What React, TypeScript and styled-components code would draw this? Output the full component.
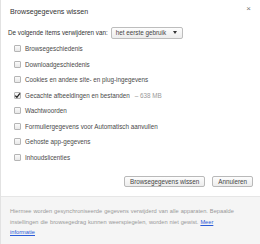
import React from 'react'
import styled, { createGlobalStyle } from 'styled-components'

const GlobalStyle = createGlobalStyle`
  html, body {
    margin: 0;
    padding: 0;
    background: #fff;
  }
  body {
    font-family: 'Liberation Sans', Arial, sans-serif;
    color: #333;
  }
`

const items = [
  { label: 'Browsegeschiedenis' },
  { label: 'Downloadgeschiedenis' },
  { label: 'Cookies en andere site- en plug-ingegevens' },
  { label: 'Gecachte afbeeldingen en bestanden', checked: true, extra: '– 638 MB' },
  { label: 'Wachtwoorden' },
  { label: 'Formuliergegevens voor Automatisch aanvullen' },
  { label: 'Gehoste app-gegevens' },
  { label: 'Inhoudslicenties' },
]

export default function App() {
  return (
    <>
      <GlobalStyle />
      <Dialog>
        <Header>
          <Title>Browsegegevens wissen</Title>
          <Close>×</Close>
        </Header>

        <RangeRow>
          <span>De volgende items verwijderen van:</span>
          <Select>
            <span>het eerste gebruik</span>
            <Arrow />
          </Select>
        </RangeRow>

        <List>
          {items.map((item) => (
            <Row key={item.label}>
              <Box $checked={item.checked}>
                {item.checked && (
                  <svg width="7" height="7" viewBox="0 0 7 7">
                    <path d="M1.2 3.6 L2.9 5.3 L5.9 1.4" fill="none" stroke="#222" strokeWidth="1.3" />
                  </svg>
                )}
              </Box>
              <span>{item.label}</span>
              {item.extra && <Extra>{item.extra}</Extra>}
            </Row>
          ))}
        </List>

        <Buttons>
          <Button>Browsegegevens wissen</Button>
          <Button>Annuleren</Button>
        </Buttons>

        <Footer>
          Hiermee worden gesynchroniseerde gegevens verwijderd van alle apparaten. Bepaalde<br />
          instellingen die browsegedrag kunnen weerspiegelen, worden niet gewist. <a href="#">Meer<br />informatie</a>
        </Footer>
      </Dialog>
    </>
  )
}

const Dialog = styled.div`
  display: flex;
  flex-direction: column;
  width: 259px;
  height: 244px;
  border-left: 1px solid #e2e2e2;
  font-size: 6.3px;
`

const Header = styled.div`
  display: flex;
  justify-content: space-between;
  align-items: flex-start;
  padding: 8px 9px 0 9px;
`

const Title = styled.div`
  font-size: 7.1px;
  line-height: 9px;
  color: #333;
`

const Close = styled.div`
  font-size: 8px;
  line-height: 8px;
  color: #777;
  margin-top: -3px;
`

const RangeRow = styled.div`
  display: flex;
  align-items: center;
  gap: 3px;
  margin-top: 9px;
  padding-left: 7px;
  height: 13px;
`

const Select = styled.div`
  display: flex;
  align-items: center;
  justify-content: space-between;
  width: 72px;
  height: 12px;
  padding: 0 5px 0 4px;
  box-sizing: border-box;
  border: 1px solid #bdbdbd;
  border-radius: 2px;
  background: linear-gradient(#fdfdfd, #ececec);
  color: #444;
`

const Arrow = styled.span`
  width: 0;
  height: 0;
  border-left: 2.5px solid transparent;
  border-right: 2.5px solid transparent;
  border-top: 3px solid #333;
`

const List = styled.div`
  display: flex;
  flex-direction: column;
  margin-top: 2px;
  padding-left: 13px;
`

const Row = styled.div`
  display: flex;
  align-items: center;
  height: 15.5px;
  gap: 4px;
  color: #4a4a4a;
`

const Box = styled.span<{ $checked?: boolean }>`
  display: flex;
  align-items: center;
  justify-content: center;
  width: 7px;
  height: 7px;
  box-sizing: border-box;
  border: 1px solid #b5b5b5;
  border-radius: 1px;
  background: linear-gradient(#fafafa, #e8e8e8);
  svg {
    display: block;
    margin: -1px;
  }
`

const Extra = styled.span`
  color: #999;
  margin-left: 1px;
`

const Buttons = styled.div`
  display: flex;
  justify-content: flex-end;
  gap: 7px;
  margin-top: 11px;
  padding-right: 7px;
`

const Button = styled.button`
  height: 11px;
  padding: 0 5px;
  border: 1px solid #b9b9b9;
  border-radius: 2px;
  background: linear-gradient(#fdfdfd, #ededed);
  font-family: inherit;
  font-size: 6.3px;
  color: #444;
  line-height: 9px;
`

const Footer = styled.div`
  margin-top: auto;
  height: 48px;
  box-sizing: border-box;
  padding: 9px 6px 0 9px;
  background: #f5f5f5;
  border-top: 1px solid #e6e6e6;
  color: #999;
  font-size: 5.7px;
  line-height: 10.5px;
  word-spacing: 0.4px;

  a {
    color: #2a5bd7;
  }
`
